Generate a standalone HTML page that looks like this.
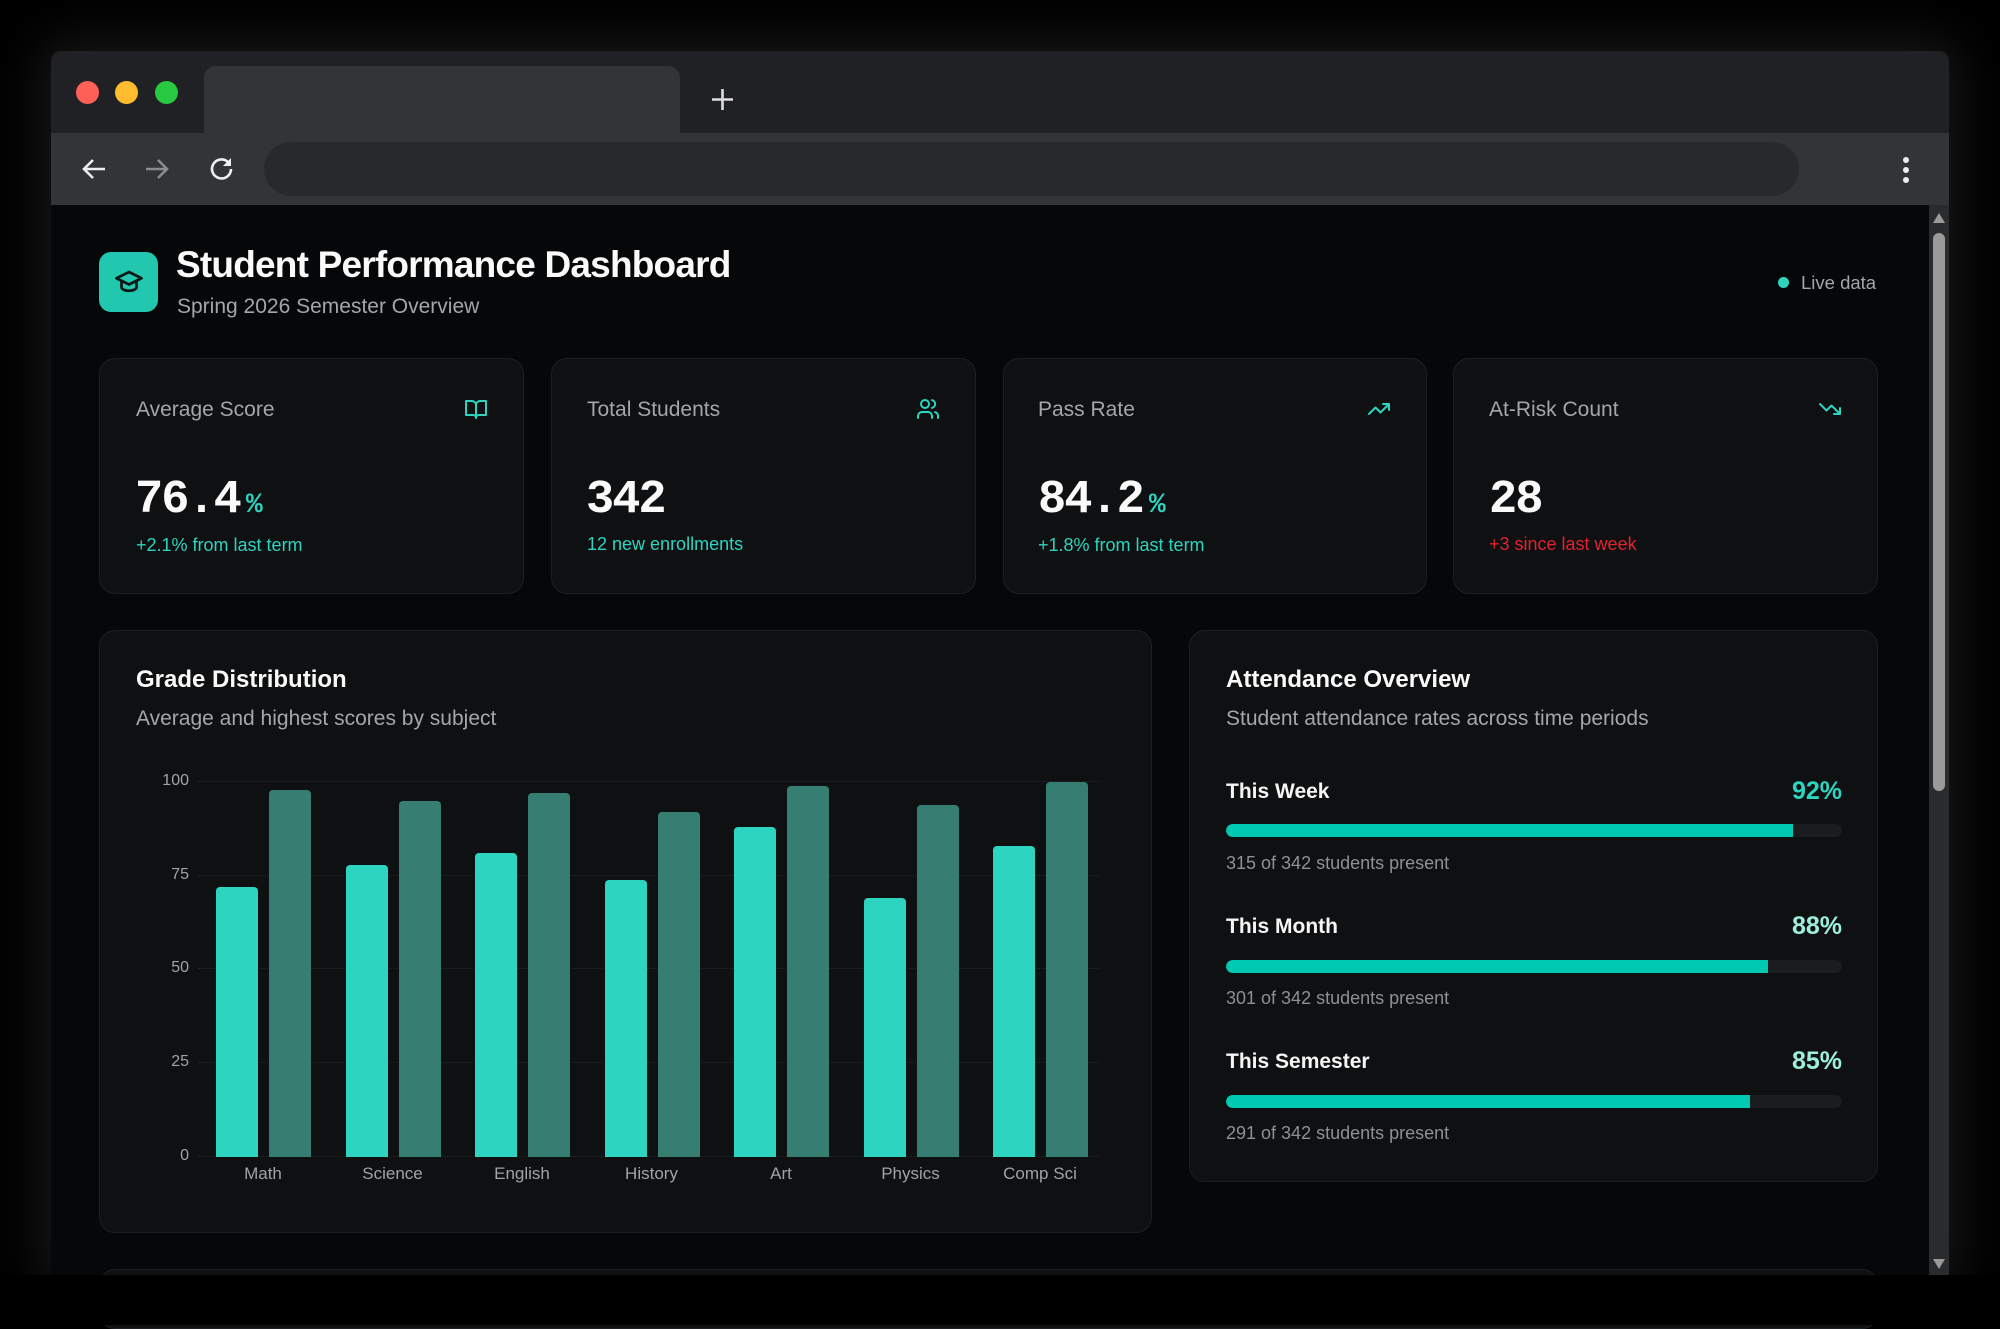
<!DOCTYPE html>
<html><head><meta charset="utf-8"><style>
*{margin:0;padding:0;box-sizing:border-box}
body{width:2000px;height:1325px;background:#000;font-family:"Liberation Sans",sans-serif;position:relative;overflow:hidden}
.abs{position:absolute}
.win{left:51px;top:51px;width:1898px;height:1224px;background:#202124;border-radius:10px 10px 0 0;box-shadow:0 0 50px 10px rgba(40,40,40,.6);overflow:hidden}
.content{left:51px;top:205px;width:1878px;height:1070px;background:#060708}
.card{position:absolute;background:#0e1012;border:1.5px solid #1c1f22;border-radius:16px}
.lbl{position:absolute;color:#a3a6aa;font-size:21px}
.val{position:absolute;color:#fafafa;font-family:"Liberation Mono",monospace;font-weight:bold;font-size:47px;letter-spacing:-2px}
.val span{color:#2dd4bf;font-size:28px;margin-left:6px}
.sub{position:absolute;font-size:18px;color:#2dd4bf}
.ax{position:absolute;color:#a0a3a7;font-size:16px;text-align:right;width:40px}
.cat{position:absolute;color:#a0a3a7;font-size:17px;text-align:center;width:120px}
.grid{position:absolute;left:198px;width:902px;border-top:1.5px dotted #23272a}
.b1,.b2{position:absolute;width:42px;border-radius:4px 4px 0 0}
.b1{background:#2dd4bf}.b2{background:#367d72}
.rl{position:absolute;color:#f5f5f5;font-size:21px;font-weight:bold;left:1226px}
.rp{position:absolute;font-size:25px;font-weight:bold;right:158px}
.tr{position:absolute;left:1226px;width:616px;height:13px;background:#1a1c1f;border-radius:7px;overflow:hidden}
.tr div{height:100%;background:#00c9b1;border-radius:7px 0 0 7px}
.cap{position:absolute;left:1226px;color:#8d9094;font-size:18px}
</style></head><body>
<div class="abs win"></div>
<div class="abs" style="left:204px;top:66px;width:476px;height:70px;background:#323538;border-radius:12px 12px 0 0"></div>
<div class="abs" style="left:76px;top:81px;width:23px;height:23px;border-radius:50%;background:#fe5f57"></div>
<div class="abs" style="left:115px;top:81px;width:23px;height:23px;border-radius:50%;background:#febc2e"></div>
<div class="abs" style="left:155px;top:81px;width:23px;height:23px;border-radius:50%;background:#28c840"></div>
<svg class="abs" style="left:710px;top:87px" width="25" height="25"><path d="M12.5 2v21M2 12.5h21" stroke="#ddd" stroke-width="2.6"/></svg>
<div class="abs" style="left:51px;top:133px;width:1898px;height:72px;background:#323538"></div>
<div class="abs" style="left:264px;top:142px;width:1535px;height:54px;background:#27292c;border-radius:27px"></div>
<svg class="abs" style="left:80px;top:155px" width="28" height="28"><path d="M25 14H4M13 5l-9 9 9 9" stroke="#eee" stroke-width="2.6" fill="none"/></svg>
<svg class="abs" style="left:143px;top:155px" width="28" height="28"><path d="M3 14h21M15 5l9 9-9 9" stroke="#8a8c8f" stroke-width="2.6" fill="none"/></svg>
<svg class="abs" style="left:207px;top:154px" width="30" height="30"><path d="M24 15a9.5 9.5 0 1 1-3-7" stroke="#eee" stroke-width="2.6" fill="none"/><path d="M24 4v8h-8" fill="#eee"/></svg>
<div class="abs" style="left:1903px;top:157px;width:6px;height:6px;border-radius:50%;background:#eee;box-shadow:0 10px 0 #eee,0 20px 0 #eee"></div>
<div class="abs content"></div>
<div class="abs" style="left:1929px;top:205px;width:20px;height:1070px;background:#2a2b2d"></div>
<svg class="abs" style="left:1932px;top:212px" width="14" height="12"><path d="M7 1L13 11H1z" fill="#9a9a9a"/></svg>
<div class="abs" style="left:1933px;top:233px;width:12px;height:558px;background:#9a9a9a;border-radius:6px"></div>
<svg class="abs" style="left:1932px;top:1258px" width="14" height="12"><path d="M7 11L13 1H1z" fill="#9a9a9a"/></svg>
<div class="abs" style="left:99px;top:252px;width:59px;height:60px;background:#21c7ae;border-radius:12px"></div>
<svg class="abs" style="left:114px;top:268px" width="30" height="28" viewBox="0 0 24 22"><path d="M12 3L2 8l10 5 10-5z M6 10v5c0 2 3 3 6 3s6-1 6-3v-5" stroke="#0a1a17" stroke-width="2.2" fill="none" stroke-linejoin="round"/></svg>
<div class="abs" style="left:176px;top:244px;color:#fafafa;font-size:37px;font-weight:bold;letter-spacing:-0.8px">Student Performance Dashboard</div>
<div class="abs" style="left:177px;top:295px;color:#a3a6aa;font-size:21px">Spring 2026 Semester Overview</div>
<div class="abs" style="left:1778px;top:277px;width:11px;height:11px;border-radius:50%;background:#2dd4bf"></div>
<div class="abs" style="left:1801px;top:272px;color:#a3a6aa;font-size:18.5px">Live data</div>
<div class="card" style="left:99px;top:358px;width:425px;height:236px"></div>
<div class="card" style="left:551px;top:358px;width:425px;height:236px"></div>
<div class="card" style="left:1003px;top:358px;width:424px;height:236px"></div>
<div class="card" style="left:1453px;top:358px;width:425px;height:236px"></div>
<div class="lbl" style="left:136px;top:398px">Average Score</div>
<div class="lbl" style="left:587px;top:398px">Total Students</div>
<div class="lbl" style="left:1038px;top:398px">Pass Rate</div>
<div class="lbl" style="left:1489px;top:398px">At-Risk Count</div>
<svg class="abs" style="left:464px;top:397px" width="24" height="24" viewBox="0 0 24 24" fill="none" stroke="#2dd4bf" stroke-width="2" stroke-linejoin="round"><path d="M2 4h6a4 4 0 0 1 4 4v13a3 3 0 0 0-3-3H2zM22 4h-6a4 4 0 0 0-4 4v13a3 3 0 0 1 3-3h7z"/></svg>
<svg class="abs" style="left:916px;top:397px" width="24" height="24" viewBox="0 0 24 24" fill="none" stroke="#2dd4bf" stroke-width="2" stroke-linecap="round"><circle cx="9" cy="7" r="4"/><path d="M2 21v-2a4 4 0 0 1 4-4h6a4 4 0 0 1 4 4v2M16 3.1a4 4 0 0 1 0 7.8M22 21v-2a4 4 0 0 0-3-3.9"/></svg>
<svg class="abs" style="left:1367px;top:397px" width="24" height="24" viewBox="0 0 24 24" fill="none" stroke="#2dd4bf" stroke-width="2" stroke-linecap="round" stroke-linejoin="round"><path d="M22 7l-8.5 8.5-5-5L2 17M16 7h6v6"/></svg>
<svg class="abs" style="left:1818px;top:397px" width="24" height="24" viewBox="0 0 24 24" fill="none" stroke="#2dd4bf" stroke-width="2" stroke-linecap="round" stroke-linejoin="round"><path d="M22 17l-8.5-8.5-5 5L2 7M16 17h6v-6"/></svg>
<div class="val" style="left:135px;top:474px">76.4<span>%</span></div>
<div class="val" style="left:586px;top:474px">342</div>
<div class="val" style="left:1038px;top:474px">84.2<span>%</span></div>
<div class="val" style="left:1489px;top:474px">28</div>
<div class="sub" style="left:136px;top:535px">+2.1% from last term</div>
<div class="sub" style="left:587px;top:534px">12 new enrollments</div>
<div class="sub" style="left:1038px;top:535px">+1.8% from last term</div>
<div class="sub" style="left:1489px;top:534px;color:#e5212f">+3 since last week</div>
<div class="card" style="left:99px;top:630px;width:1053px;height:603px"></div>
<div class="abs" style="left:136px;top:666px;color:#fafafa;font-size:24px;font-weight:bold">Grade Distribution</div>
<div class="abs" style="left:136px;top:707px;color:#a3a6aa;font-size:21px">Average and highest scores by subject</div>
<div class="grid" style="top:781px"></div><div class="grid" style="top:875px"></div><div class="grid" style="top:968px"></div><div class="grid" style="top:1062px"></div><div class="grid" style="top:1156px"></div>
<div class="ax" style="left:149px;top:772px">100</div>
<div class="ax" style="left:149px;top:866px">75</div>
<div class="ax" style="left:149px;top:959px">50</div>
<div class="ax" style="left:149px;top:1053px">25</div>
<div class="ax" style="left:149px;top:1147px">0</div>
<div id="bars"></div>
<script>
var d=[["Math",72,98],["Science",78,95],["English",81,97],["History",74,92],["Art",88,99],["Physics",69,94],["Comp Sci",83,100]];
var h="",base=1157,s=3.75;
d.forEach(function(r,i){var x=216+i*129.5;
h+='<div class="b1" style="left:'+x+'px;top:'+(base-r[1]*s)+'px;height:'+(r[1]*s)+'px"></div>';
h+='<div class="b2" style="left:'+(x+53)+'px;top:'+(base-r[2]*s)+'px;height:'+(r[2]*s)+'px"></div>';
h+='<div class="cat" style="left:'+(x+47-60)+'px;top:1164px">'+r[0]+'</div>';});
document.getElementById("bars").innerHTML=h;
</script>
<div class="card" style="left:1189px;top:630px;width:689px;height:552px"></div>
<div class="abs" style="left:1226px;top:666px;color:#fafafa;font-size:24px;font-weight:bold">Attendance Overview</div>
<div class="abs" style="left:1226px;top:707px;color:#a3a6aa;font-size:21px">Student attendance rates across time periods</div>
<div class="rl" style="top:780px">This Week</div><div class="rp" style="top:777px;color:#2dd4bf">92%</div>
<div class="tr" style="top:824px"><div style="width:92%"></div></div>
<div class="cap" style="top:853px">315 of 342 students present</div>
<div class="rl" style="top:915px">This Month</div><div class="rp" style="top:912px;color:#9eeedc">88%</div>
<div class="tr" style="top:960px"><div style="width:88%"></div></div>
<div class="cap" style="top:988px">301 of 342 students present</div>
<div class="rl" style="top:1050px">This Semester</div><div class="rp" style="top:1047px;color:#9eeedc">85%</div>
<div class="tr" style="top:1095px"><div style="width:85%"></div></div>
<div class="cap" style="top:1123px">291 of 342 students present</div>
<div class="card" style="left:99px;top:1269px;width:1779px;height:60px"></div>
<div class="abs" style="left:0;top:1275px;width:2000px;height:50px;background:#000"></div>
</body></html>
